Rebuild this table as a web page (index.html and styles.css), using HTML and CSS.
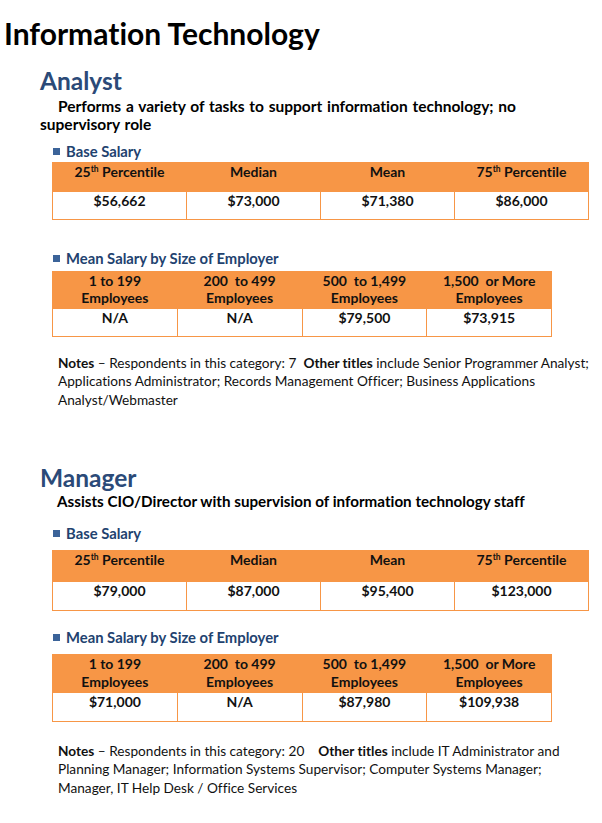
FILE: index.html
```html
<!DOCTYPE html>
<html lang="en">
<head>
<meta charset="utf-8">
<title>Information Technology</title>
<link rel="stylesheet" href="styles.css">
</head>
<body>
<h1 class="page-title">Information Technology</h1>

<section class="job job--analyst">
  <h2 class="job-title">Analyst</h2>
  <p class="job-desc"><span class="indent"></span>Performs a variety of tasks to support information technology; no supervisory role</p>

  <h3 class="sub">Base Salary</h3>
  <table class="grid grid--wide">
    <tr class="head">
      <th>25<sup>th</sup> Percentile</th>
      <th>Median</th>
      <th>Mean</th>
      <th>75<sup>th</sup> Percentile</th>
    </tr>
    <tr class="data">
      <td>$56,662</td>
      <td>$73,000</td>
      <td>$71,380</td>
      <td>$86,000</td>
    </tr>
  </table>

  <h3 class="sub sub--gap">Mean Salary by Size of Employer</h3>
  <table class="grid grid--narrow">
    <tr class="head head--two">
      <th>1 to 199<br>Employees</th>
      <th>200&nbsp; to 499<br>Employees</th>
      <th>500&nbsp; to 1,499<br>Employees</th>
      <th>1,500&nbsp; or More<br>Employees</th>
    </tr>
    <tr class="data">
      <td>N/A</td>
      <td>N/A</td>
      <td>$79,500</td>
      <td>$73,915</td>
    </tr>
  </table>

  <p class="notes"><b>Notes</b> – Respondents in this category: 7&nbsp; <b>Other titles</b> include Senior Programmer Analyst; Applications Administrator; Records Management Officer; Business Applications Analyst/Webmaster</p>
</section>

<section class="job job--manager">
  <h2 class="job-title">Manager</h2>
  <p class="job-desc">Assists CIO/Director with supervision of information technology staff</p>

  <h3 class="sub">Base Salary</h3>
  <table class="grid grid--wide">
    <tr class="head">
      <th>25<sup>th</sup> Percentile</th>
      <th>Median</th>
      <th>Mean</th>
      <th>75<sup>th</sup> Percentile</th>
    </tr>
    <tr class="data">
      <td>$79,000</td>
      <td>$87,000</td>
      <td>$95,400</td>
      <td>$123,000</td>
    </tr>
  </table>

  <h3 class="sub sub--gap">Mean Salary by Size of Employer</h3>
  <table class="grid grid--narrow">
    <tr class="head head--two">
      <th>1 to 199<br>Employees</th>
      <th>200&nbsp; to 499<br>Employees</th>
      <th>500&nbsp; to 1,499<br>Employees</th>
      <th>1,500&nbsp; or More<br>Employees</th>
    </tr>
    <tr class="data">
      <td>$71,000</td>
      <td>N/A</td>
      <td>$87,980</td>
      <td>$109,938</td>
    </tr>
  </table>

  <p class="notes"><b>Notes</b> – Respondents in this category: 20&nbsp;&nbsp;&nbsp; <b>Other titles</b> include IT Administrator and Planning Manager; Information Systems Supervisor; Computer Systems Manager; Manager, IT Help Desk / Office Services</p>
</section>
</body>
</html>
```

FILE: styles.css
```css
* {
  box-sizing: border-box;
}

html,
body {
  background: #ffffff;
}

body {
  margin: 0;
  padding: 16px 0 0 0;
  font-family: "Lato", "Carlito", "Open Sans", sans-serif;
  color: #000000;
  font-variant-ligatures: none;
}

.page-title {
  margin: 0 0 0 4px;
  font-size: 30px;
  line-height: 34px;
  font-weight: 700;
}

.job {
  padding-left: 40px;
}

.job-title {
  margin: 16.5px 0 0 0;
  font-size: 24.5px;
  line-height: 28px;
  font-weight: 700;
  color: #2b4a78;
}

.job--manager .job-title {
  margin-top: 54.5px;
}

.job-desc {
  margin: 2.3px 0 0 0;
  padding-right: 40px;
  font-size: 15.5px;
  line-height: 18px;
  font-weight: 700;
}

.job--analyst .job-desc {
  word-spacing: 1px;
}

.job-desc .indent {
  display: inline-block;
  width: 18px;
}

.job--manager .job-desc {
  margin-top: 0.5px;
  padding-left: 17px;
  font-size: 15.2px;
}

.sub {
  display: flex;
  align-items: baseline;
  margin: 9.3px 0 0 13px;
  font-size: 14.8px;
  line-height: 18px;
  font-weight: 700;
  color: #22426f;
}

.sub::before {
  content: "";
  flex: none;
  width: 7px;
  height: 7px;
  margin-right: 6px;
  background: #3b6399;
  align-self: flex-end;
  margin-bottom: 5px;
}

.sub--gap {
  margin-top: 28.5px;
}

.job--manager .sub {
  margin-top: 13.6px;
}

.job--manager .sub--gap {
  margin-top: 17px;
}

.grid {
  margin: 2px 0 0 12px;
  border-collapse: collapse;
  table-layout: fixed;
  font-size: 14px;
  font-weight: 700;
  color: #111111;
}

.job--analyst .grid--narrow {
  margin-top: 4px;
}

.job--manager .grid {
  margin-top: 8.3px;
}

.grid--wide {
  width: 537px;
}

.grid--narrow {
  width: 500px;
}

.grid th,
.grid td {
  padding: 0 2px;
  text-align: center;
  vertical-align: top;
  line-height: 17.6px;
  border: 1px solid #f79646;
}

.grid th {
  background: #f79646;
  font-weight: 700;
}

.head {
  height: 29px;
}

.job--manager .head {
  height: 31px;
}

.head--two {
  height: 37px;
}

.job--manager .head--two {
  height: 38px;
}

.data {
  height: 28px;
}

.job--manager .data {
  height: 29px;
}

.grid sup {
  font-size: 8.5px;
  line-height: 0;
  vertical-align: 5px;
}

.notes {
  margin: 17px 12px 0 18px;
  font-size: 13.65px;
  line-height: 18.5px;
  font-weight: 400;
  color: #111111;
}

.job--manager .notes {
  margin-top: 19.5px;
}

.notes b {
  font-weight: 700;
}
```
